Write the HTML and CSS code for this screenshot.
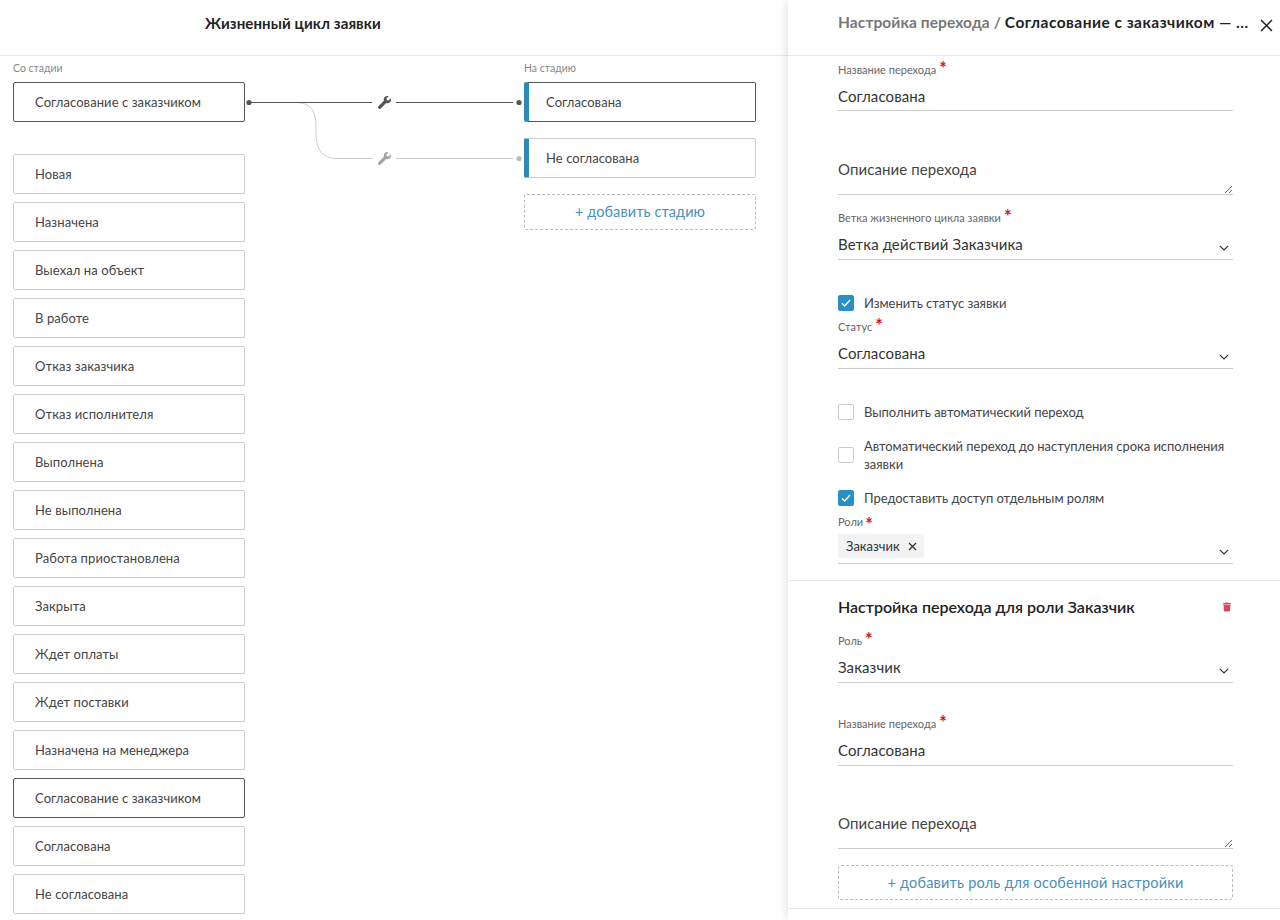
FILE: index.html
```html
<!DOCTYPE html>
<html lang="ru">
<head>
<meta charset="utf-8">
<title>Жизненный цикл заявки</title>
<link rel="stylesheet" href="styles.css">
</head>
<body>
<svg class="defs" width="0" height="0" aria-hidden="true">
  <symbol id="wrench" viewBox="0 0 512 512"><path d="M507.73 109.1c-2.24-9.03-13.54-12.09-20.12-5.51l-74.36 74.36-67.88-11.31-11.31-67.88 74.36-74.36c6.62-6.62 3.43-17.9-5.66-20.16-47.38-11.74-99.55.91-136.58 37.93-39.64 39.64-50.55 97.1-34.05 147.2L18.74 402.76c-24.99 24.99-24.99 65.51 0 90.5 24.99 24.99 65.51 24.99 90.5 0l213.21-213.21c50.12 16.71 107.47 5.68 147.37-34.22 37.07-37.07 49.7-89.32 37.91-136.73z"/></symbol>
  <symbol id="chev" viewBox="0 0 10 6"><path d="M.8.8 5 5 9.2.8" fill="none" stroke="currentColor" stroke-width="1.2"/></symbol>
  <symbol id="tick" viewBox="0 0 10 8"><path d="M1 4.2 3.7 7 9 1" fill="none" stroke="#fff" stroke-width="1.3"/></symbol>
</svg>
<div class="app">
  <main class="board">
    <header class="board-head"><h1 class="board-title">Жизненный цикл заявки</h1></header>
    <div class="columns">
      <section class="col">
        <div class="col-label">Со стадии</div>
        <div class="stage stage-active">Согласование с заказчиком</div>
        <div class="stage-list">
          <div class="stage">Новая</div>
          <div class="stage">Назначена</div>
          <div class="stage">Выехал на объект</div>
          <div class="stage">В работе</div>
          <div class="stage">Отказ заказчика</div>
          <div class="stage">Отказ исполнителя</div>
          <div class="stage">Выполнена</div>
          <div class="stage">Не выполнена</div>
          <div class="stage">Работа приостановлена</div>
          <div class="stage">Закрыта</div>
          <div class="stage">Ждет оплаты</div>
          <div class="stage">Ждет поставки</div>
          <div class="stage">Назначена на менеджера</div>
          <div class="stage stage-active">Согласование с заказчиком</div>
          <div class="stage">Согласована</div>
          <div class="stage">Не согласована</div>
        </div>
      </section>
      <div class="links">
        <svg class="links-svg" width="279" height="100" viewBox="0 0 279 100">
          <g class="link-muted">
            <path class="wire" d="M50 20.5C65 20.5 71 28 71 45V52C71 68 78 76.5 92 76.5H128M151 76.5H268"/>
            <circle cx="274" cy="76.5" r="2.6"/>
            <use href="#wrench" x="133" y="70" width="13" height="13"/>
          </g>
          <g class="link-strong">
            <path class="wire" d="M3 20.5H127M151 20.5H268"/>
            <circle cx="4" cy="20.5" r="2.6"/>
            <circle cx="274" cy="20.5" r="2.6"/>
            <use href="#wrench" x="133" y="14" width="13" height="13"/>
          </g>
        </svg>
      </div>
      <section class="col">
        <div class="col-label">На стадию</div>
        <div class="stage stage-target stage-active">Согласована</div>
        <div class="stage stage-target">Не согласована</div>
        <div class="add-stage">+ добавить стадию</div>
      </section>
    </div>
  </main>

  <aside class="panel">
    <header class="panel-head">
      <h2 class="panel-title"><span class="crumb">Настройка перехода / </span>Согласование с заказчиком — ...</h2>
      <svg class="close" width="13" height="13" viewBox="0 0 13 13"><path d="M1 1l11 11M12 1 1 12" fill="none" stroke="#222" stroke-width="1.5"/></svg>
    </header>
    <div class="panel-body">
      <div class="group">
        <div class="field f-first">
          <label class="label">Название перехода<span class="req">*</span></label>
          <div class="value">Согласована</div>
        </div>
        <div class="area a-first">Описание перехода</div>
        <div class="field f-branch">
          <label class="label">Ветка жизненного цикла заявки<span class="req">*</span></label>
          <div class="value select">Ветка действий Заказчика<svg class="chev"><use href="#chev"/></svg></div>
        </div>
        <div class="check c-status"><span class="box on"><svg width="10" height="8"><use href="#tick"/></svg></span>Изменить статус заявки</div>
        <div class="field f-tight">
          <label class="label">Статус<span class="req">*</span></label>
          <div class="value select">Согласована<svg class="chev"><use href="#chev"/></svg></div>
        </div>
        <div class="check c-auto"><span class="box"></span>Выполнить автоматический переход</div>
        <div class="check check-wrap c-next"><span class="box"></span><span>Автоматический переход до наступления срока исполнения заявки</span></div>
        <div class="check c-next"><span class="box on"><svg width="10" height="8"><use href="#tick"/></svg></span>Предоставить доступ отдельным ролям</div>
        <div class="field f-tight">
          <label class="label">Роли<span class="req req-low">*</span></label>
          <div class="value select value-chips"><span class="chip">Заказчик<svg class="chip-x" width="9" height="9" viewBox="0 0 9 9"><path d="M1 1l7 7M8 1 1 8" fill="none" stroke="#333" stroke-width="1.3"/></svg></span><svg class="chev"><use href="#chev"/></svg></div>
        </div>
      </div>
      <div class="group group-role">
        <div class="role-head">
          <h3 class="role-title">Настройка перехода для роли Заказчик</h3>
          <svg class="trash" width="8" height="10" viewBox="0 0 448 512"><path d="M432 32H312l-9.4-18.7A24 24 0 0 0 281.1 0H166.8a23.72 23.72 0 0 0-21.4 13.3L136 32H16A16 16 0 0 0 0 48v32a16 16 0 0 0 16 16h416a16 16 0 0 0 16-16V48a16 16 0 0 0-16-16zM53.2 467a48 48 0 0 0 47.9 45h245.8a48 48 0 0 0 47.9-45L416 128H32z"/></svg>
        </div>
        <div class="field f-role">
          <label class="label">Роль<span class="req">*</span></label>
          <div class="value select">Заказчик<svg class="chev"><use href="#chev"/></svg></div>
        </div>
        <div class="field f-name">
          <label class="label">Название перехода<span class="req">*</span></label>
          <div class="value">Согласована</div>
        </div>
        <div class="area a-second">Описание перехода</div>
        <div class="add-role">+ добавить роль для особенной настройки</div>
      </div>
    </div>
  </aside>
</div>
</body>
</html>
```
FILE: styles.css
```css
* { box-sizing: border-box; }
html, body { margin: 0; height: 100%; overflow: hidden; background: #fff; }
body { font-family: "Lato", "Open Sans", "Liberation Sans", sans-serif; color: #333; }
.defs { display: block; height: 0; }
.app { display: flex; width: 1280px; height: 920px; overflow: hidden; }

.board { width: 788px; flex: none; }
.board-head { height: 56px; border-bottom: 1px solid #e6e6e6; padding: 14px 0 0 205px; }
.board-title { margin: 0; font-size: 15px; line-height: 18px; font-weight: 700; letter-spacing: .1px; color: #222; }
.columns { display: flex; padding-left: 13px; }
.col { width: 232px; flex: none; }
.col-label { height: 12px; margin: 6px 0 8px; font-size: 10.5px; line-height: 12px; color: #888; }
.stage { height: 40px; border: 1px solid #ccc; border-radius: 2px; padding-left: 21px; font-size: 13px; line-height: 38px; letter-spacing: .08px; color: #444; background: #fff; }
.stage-active { border-color: #555; }
.stage-list { display: flex; flex-direction: column; gap: 8px; margin-top: 32px; }
.stage-target { border-left: 5px solid #2a8ab8; margin-bottom: 16px; padding-left: 17px; }
.stage-target.stage-active { border-left-color: #2a8ab8; }
.add-stage { height: 36px; border: 1px dashed #bbb; border-radius: 3px; text-align: center; font-size: 14.5px; line-height: 34px; letter-spacing: .1px; color: #4a90b8; }
.links { width: 279px; flex: none; padding-top: 26px; }
.links-svg { display: block; }
.wire { fill: none; stroke-width: 1; stroke: currentColor; }
.link-strong { color: #555; fill: #555; }
.link-muted { color: #ccc; fill: #bbb; }
.link-muted use { fill: #a5a5a5; }

.panel { width: 492px; flex: none; background: #fff; box-shadow: 0 0 10px rgba(0,0,0,.16); position: relative; }
.panel-head { height: 56px; border-bottom: 1px solid #e6e6e6; padding: 13px 0 0 50px; display: flex; }
.panel-title { margin: 0; font-size: 15.5px; line-height: 18px; font-weight: 700; letter-spacing: .47px; color: #222; white-space: nowrap; width: 422px; overflow: hidden; }
.crumb { color: #777; letter-spacing: .1px; }
.close { margin-top: 6px; flex: none; }
.panel-body { display: block; }
.group { padding: 0 47px 16px 50px; border-bottom: 1px solid #e6e6e6; }
.group-role { padding-bottom: 8px; }

.field { display: block; }
.label { display: block; height: 16px; font-size: 11px; line-height: 16px; color: #666; }
.req { color: #d0142c; font-size: 18px; font-weight: 700; line-height: 10px; margin-left: 3px; vertical-align: -1px; }
.req-low { margin-left: 2px; vertical-align: -5px; }
.value { height: 34px; padding-top: 6px; border-bottom: 1px solid #ccc; font-size: 15px; line-height: 24px; letter-spacing: .1px; color: #333; }
.f-first .value { height: 33px; }
.select { display: flex; justify-content: space-between; align-items: flex-start; }
.chev { width: 10px; height: 6px; margin: 13px 4px 0 0; color: #333; flex: none; }
.value-chips { height: 34px; padding-top: 4px; }
.value-chips .chev { margin-top: 15px; }
.chip { display: inline-flex; align-items: center; gap: 8px; height: 24px; padding: 0 7px 0 8px; background: #f1f3f5; border-radius: 2px; font-size: 13px; color: #333; letter-spacing: 0; }
.f-first { margin-top: 6px; }
.f-branch { margin-top: 15px; }
.f-tight { margin-top: 4px; }
.f-role { margin-top: 13px; }
.f-name { margin-top: 33px; }
.area { height: 37px; border-bottom: 1px solid #ccc; font-size: 15px; line-height: 22px; letter-spacing: .1px; color: #444; resize: vertical; overflow: hidden; }
.a-first { margin-top: 47px; }
.a-second { margin-top: 46px; }

.check { display: flex; align-items: center; gap: 10px; min-height: 24px; font-size: 13px; line-height: 18px; letter-spacing: -.05px; color: #444; }
.box { width: 16px; height: 16px; flex: none; border: 1px solid #ccc; border-radius: 2px; display: flex; align-items: center; justify-content: center; background: #fff; }
.box.on { background: #2a8fc4; border-color: #2a8fc4; }
.c-status { margin-top: 31px; }
.c-auto { margin-top: 31px; }
.c-next { margin-top: 13px; }

.role-head { display: flex; justify-content: space-between; align-items: center; padding-top: 13px; height: 39px; padding-right: 2px; }
.role-title { margin: 0; font-size: 16px; line-height: 20px; font-weight: 600; color: #222; }
.trash { fill: #d9485f; }
.add-role { height: 35px; margin-top: 16px; border: 1px dashed #bbb; border-radius: 3px; text-align: center; font-size: 14.5px; line-height: 33px; letter-spacing: .2px; color: #4a90b8; }
```
